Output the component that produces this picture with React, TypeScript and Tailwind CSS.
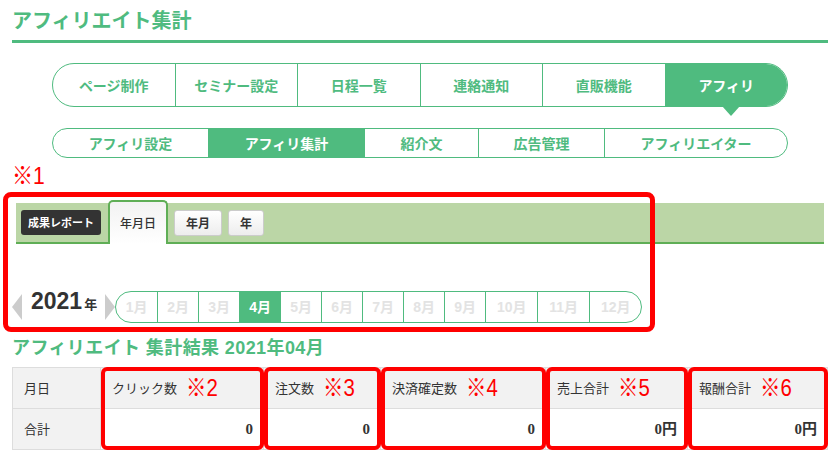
import React from 'react';

const GREEN = '#4fbb7f';

const topNav = ['ページ制作', 'セミナー設定', '日程一覧', '連絡通知', '直販機能', 'アフィリ'];
const subNav = [
  { label: 'アフィリ設定', w: 'w-[155px]' },
  { label: 'アフィリ集計', w: 'w-[156px]', active: true },
  { label: '紹介文', w: 'w-[114px]' },
  { label: '広告管理', w: 'w-[126px]' },
  { label: 'アフィリエイター', w: 'flex-1' },
];
const months = ['1月', '2月', '3月', '4月', '5月', '6月', '7月', '8月', '9月', '10月', '11月', '12月'];

const cols = [
  { label: '月日', val: '合計', w: 'w-[88px]', first: true },
  { label: 'クリック数', note: '※2', val: '0', w: 'w-[163px]' },
  { label: '注文数', note: '※3', val: '0', w: 'w-[117px]' },
  { label: '決済確定数', note: '※4', val: '0', w: 'w-[165px]' },
  { label: '売上合計', note: '※5', val: '0円', w: 'w-[142px]' },
  { label: '報酬合計', note: '※6', val: '0円', w: 'flex-1' },
];

export default function App() {
  return (
    <div className="w-[839px] h-[461px] overflow-hidden bg-white pl-[12px] pr-[11px] font-['Noto_Sans_CJK_JP',sans-serif] text-[#333]">
      {/* Title */}
      <div className="mt-[10px] pb-[10px] border-b-[3px] border-[#4fbb7f]">
        <h1 className="text-[20px] leading-[20px] font-bold text-[#4fbb7f]">アフィリエイト集計</h1>
      </div>

      {/* Top nav */}
      <div className="relative mt-[20px] ml-[40px] w-[736px] h-[44px] flex border border-[#4fbb7f] rounded-full">
        {topNav.map((t, i) => {
          const active = i === topNav.length - 1;
          return (
            <div
              key={t}
              className={
                'flex-1 flex items-center justify-center text-[14px] font-bold ' +
                (i > 0 ? 'border-l border-[#4fbb7f] ' : '') +
                (active ? 'bg-[#4fbb7f] text-white rounded-r-full' : 'text-[#4fbb7f]')
              }
            >
              {t}
            </div>
          );
        })}
        <svg className="absolute left-[669px] top-[42px]" width="18" height="11" viewBox="0 0 18 11">
          <polygon points="0,0 18,0 9,10" fill={GREEN} />
        </svg>
      </div>

      {/* Sub nav */}
      <div className="mt-[21px] ml-[40px] w-[736px] h-[30px] flex border border-[#4fbb7f] rounded-full overflow-hidden">
        {subNav.map((s, i) => (
          <div
            key={s.label}
            className={
              s.w +
              ' flex items-center justify-center text-[14px] font-bold ' +
              (i > 0 ? 'border-l border-[#4fbb7f] ' : '') +
              (s.active ? 'bg-[#4fbb7f] text-white' : 'text-[#4fbb7f]')
            }
          >
            {s.label}
          </div>
        ))}
      </div>

      {/* Note 1 */}
      <div className="mt-[7px] h-[22px] leading-[22px] text-[24px] text-[#ff0000] font-['Liberation_Sans','Noto_Sans_CJK_JP',sans-serif]">
        <span className="inline-block origin-left scale-x-[0.88]">※1</span>
      </div>

      {/* Report panel */}
      <div className="relative mt-[16px]">
        <div className="mx-[4px] h-[41px] bg-[#bbd6a6] border-b-2 border-[#5fae56] flex items-center pl-[5px]">
          <div className="h-[25px] px-[7px] flex items-center rounded-[3px] bg-[#333] text-white text-[11px] font-bold">
            成果レポート
          </div>
          <div className="self-end -mb-[2px] ml-[7px] h-[44px] w-[60px] flex items-center justify-center border-2 border-b-0 border-[#5fae56] rounded-t-[5px] bg-gradient-to-b from-[#f2f2f2] to-white text-[12px] font-medium text-[#333]">
            年月日
          </div>
          <div className="ml-[6px] h-[26px] w-[48px] flex items-center justify-center border border-[#ccc] rounded-[3px] bg-gradient-to-b from-white to-[#ededed] text-[12px] font-bold text-[#333]">
            年月
          </div>
          <div className="ml-[6px] h-[26px] w-[36px] flex items-center justify-center border border-[#ccc] rounded-[3px] bg-gradient-to-b from-white to-[#ededed] text-[12px] font-bold text-[#333]">
            年
          </div>
        </div>

        {/* Year / months */}
        <div className="mt-[47px] h-[32px] flex items-center">
          <svg width="10" height="26" viewBox="0 0 10 26" className="shrink-0">
            <polygon points="10,0 10,26 0,13" fill="#cccccc" />
          </svg>
          <div className="ml-[9px] mb-[11px] flex items-baseline font-bold text-[#333]">
            <span className="text-[23px] leading-[23px] font-['Liberation_Sans',sans-serif]">2021</span>
            <span className="ml-[2px] text-[13px] leading-[13px]">年</span>
          </div>
          <svg width="10" height="26" viewBox="0 0 10 26" className="ml-[8px] shrink-0">
            <polygon points="0,0 0,26 10,13" fill="#cccccc" />
          </svg>
          <div className="h-[32px] flex border border-[#4fbb7f] rounded-full overflow-hidden">
            {months.map((m, i) => (
              <div
                key={m}
                className={
                  (i >= 9 ? 'w-[52px] ' : 'w-[41px] ') +
                  'flex items-center justify-center text-[14px] font-bold font-[\'Liberation_Sans\',\'Noto_Sans_CJK_JP\',sans-serif] ' +
                  (i > 0 ? 'border-l border-[#4fbb7f] ' : '') +
                  (m === '4月' ? 'bg-[#4fbb7f] text-white' : 'text-[#e3e3e3]')
                }
              >
                {m}
              </div>
            ))}
          </div>
        </div>

        <div className="pointer-events-none absolute left-[-9px] top-[-11px] w-[652px] h-[140px] border-[5px] border-[#ff0000] rounded-[8px]" />
      </div>

      {/* Result heading */}
      <h2 className="mt-[15px] text-[18px] leading-[20px] tracking-[0.4px] font-bold text-[#4fbb7f] font-['Liberation_Sans','Noto_Sans_CJK_JP',sans-serif]">
        アフィリエイト 集計結果 2021年04月
      </h2>

      {/* Table */}
      <div className="mt-[9px] w-[816px] flex border-t border-l border-[#ddd]">
        {cols.map((c) => (
          <div key={c.label} className={c.w + ' relative flex flex-col border-r border-[#ddd]'}>
            <div className="h-[41px] flex items-center pl-[11px] bg-[#f2f2f2] border-b border-[#ddd] text-[13px]">
              <span>{c.label}</span>
              {c.note && (
                <span className="ml-[9px] inline-block origin-left scale-x-[0.85] text-[24px] leading-[24px] text-[#ff0000] font-['Liberation_Sans','Noto_Sans_CJK_JP',sans-serif]">
                  {c.note}
                </span>
              )}
            </div>
            {c.first ? (
              <div className="h-[41px] flex items-center pl-[11px] bg-[#f2f2f2] border-b border-[#ddd] text-[13px]">
                {c.val}
              </div>
            ) : (
              <div className="h-[41px] flex items-center justify-end pr-[10px] bg-white border-b border-[#ddd] text-[15px] font-bold font-['Liberation_Serif','Noto_Sans_CJK_JP',serif]">
                {c.val}
              </div>
            )}
            {!c.first && (
              <div className="pointer-events-none absolute left-0 right-[-1px] top-[-1px] bottom-0 border-4 border-[#ff0000] rounded-[6px]" />
            )}
          </div>
        ))}
      </div>
    </div>
  );
}
